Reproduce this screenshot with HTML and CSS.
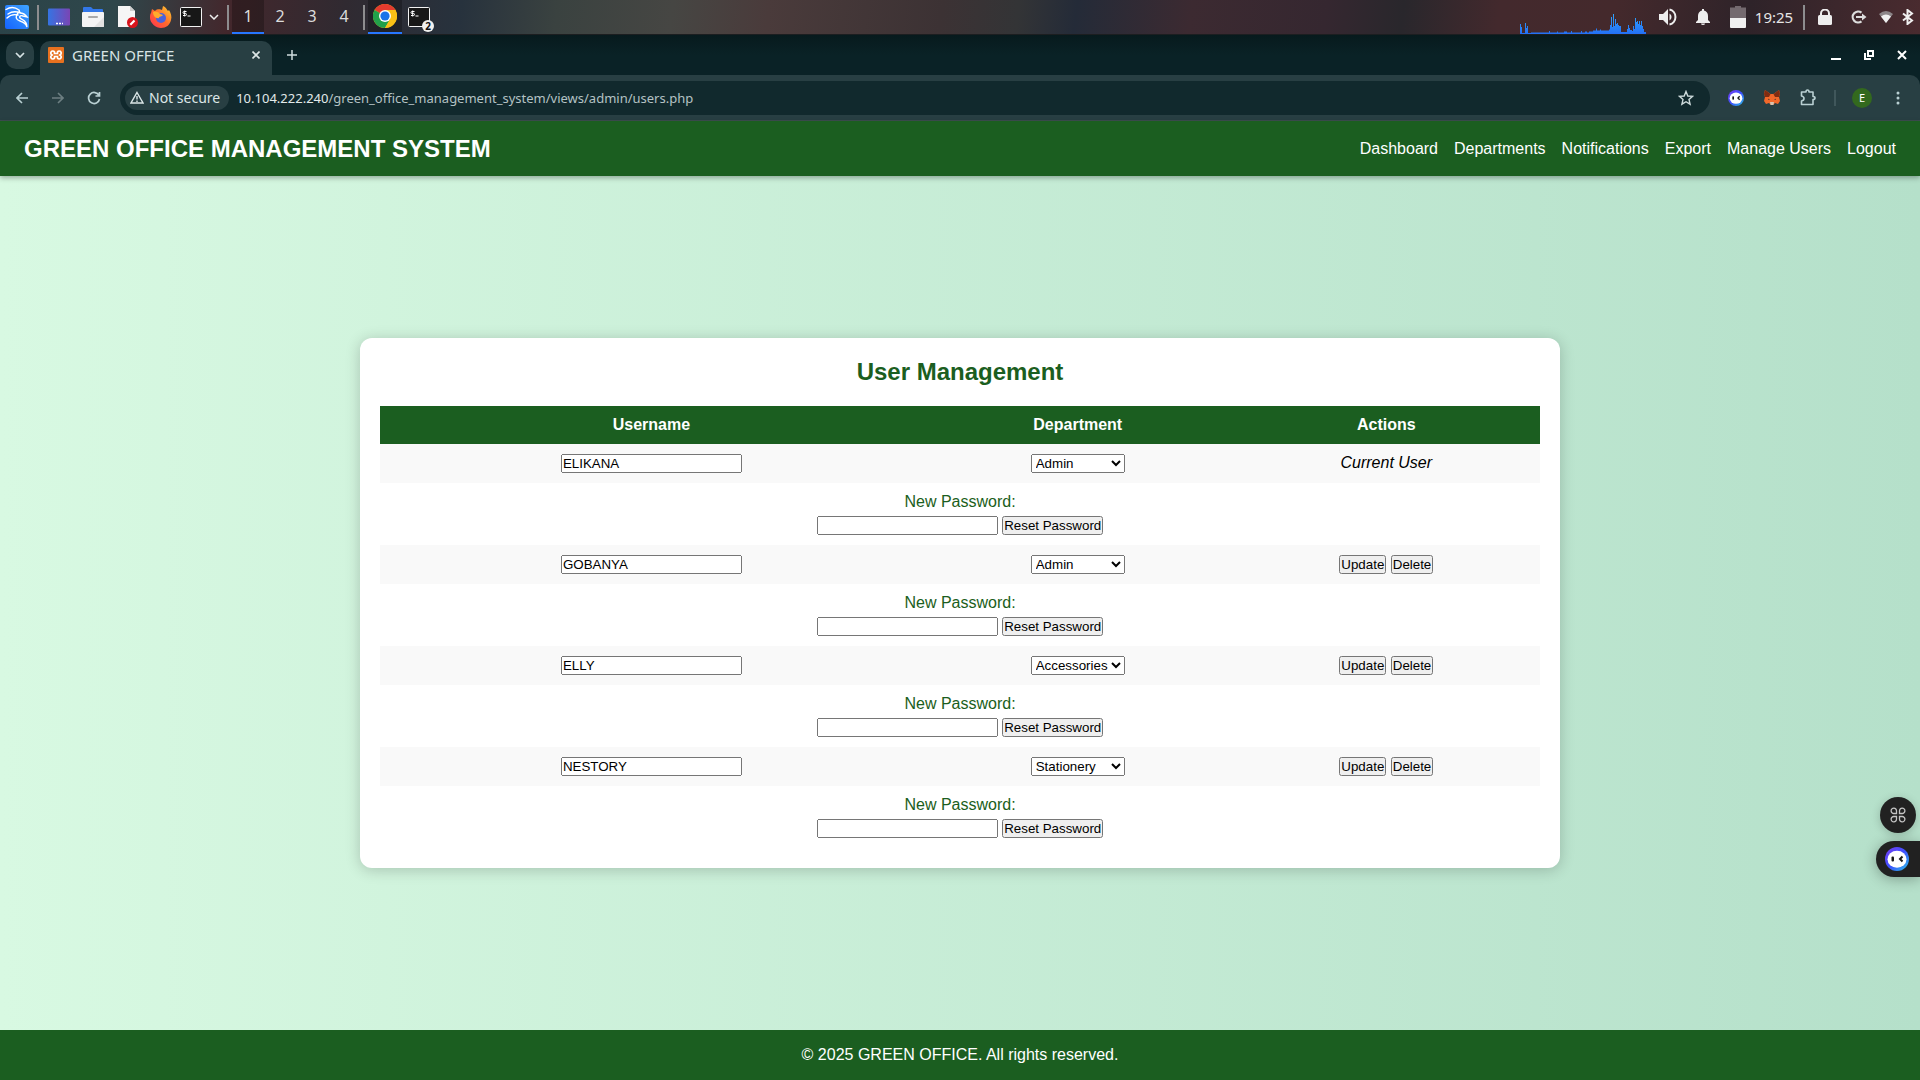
FILE: index.html
```html
<!DOCTYPE html>
<html lang="en">
<head>
<meta charset="utf-8">
<title>GREEN OFFICE</title>
<link rel="stylesheet" href="styles.css">
</head>
<body>
<svg class="defs" aria-hidden="true">
  <defs>
    <linearGradient id="kali" x1="0" y1="1" x2="1" y2="0"><stop offset="0" stop-color="#1463ff"/><stop offset="1" stop-color="#3fa4ff"/></linearGradient>
    <linearGradient id="desk" x1="0" y1="0" x2="1" y2="0"><stop offset="0" stop-color="#3574e3"/><stop offset="1" stop-color="#7a45b4"/></linearGradient>
    <linearGradient id="fox" x1="0" y1="1" x2="1" y2="0"><stop offset="0" stop-color="#ff2f55"/><stop offset=".5" stop-color="#ff6a2c"/><stop offset="1" stop-color="#ffd52e"/></linearGradient>
    <linearGradient id="load" x1="0" y1="0" x2="0" y2="1"><stop offset="0" stop-color="#2fa4ff"/><stop offset="1" stop-color="#2470f5"/></linearGradient>
    <linearGradient id="ring" x1="0" y1="0" x2="1" y2="1"><stop offset="0" stop-color="#7a3cf0"/><stop offset=".5" stop-color="#3c50ff"/><stop offset="1" stop-color="#2bc4e6"/></linearGradient>
    <symbol id="bot" viewBox="0 0 24 24">
      <circle cx="12" cy="12" r="12" fill="url(#ring)"/>
      <ellipse cx="12" cy="12.200" rx="9.500" ry="8.500" fill="#fff"/>
      <rect x="6.500" y="9.500" width="2.500" height="5" rx="1" fill="#161616"/>
      <path d="M17.500 9.500 15 12l2.500 2.500" fill="none" stroke="#161616" stroke-width="2"/>
    </symbol>
    <symbol id="term" viewBox="0 0 22 20">
      <rect x=".5" y=".5" width="21" height="19" rx="1" fill="#171717" stroke="#f2f2f2"/>
      <path d="M6.500 4.500H4Q3 4.500 3 5.500T4 6.500H5.500Q6.500 6.500 6.500 7.500T5.500 8.500H3M4.700 3.500v6M7.500 9h3" fill="none" stroke="#fff"/>
    </symbol>
  </defs>
</svg>

<div class="taskbar">
  <div class="slot"><svg width="26" height="24" viewBox="0 0 26 24"><rect x="1" width="24" height="24" rx="2" fill="url(#kali)"/><path d="M2 4.500C6 2 11 2 15 5M4 9c4-3 8-3 13-1M3 13c3-3 7-4 11-3M15 5l1 3c3 0 5 1 7 4l-4-1c-2-1-4 0-3 2 2 2 7 2 7 9-1-4-4-5-7-6-4-1-5-4-2-8" fill="none" stroke="#fff" stroke-width="1.400" stroke-linecap="round"/></svg></div>
  <span class="rule"></span>
  <div class="slot"><svg width="22" height="18" viewBox="0 0 22 18"><rect y=".5" width="22" height="17" rx="1" fill="url(#desk)"/><path d="M8 15.500h2m1 0h2m1 0h1" stroke="#fff" stroke-width="1.500"/></svg></div>
  <div class="slot"><svg width="22" height="20" viewBox="0 0 22 20"><path d="M1 1q0-1 1-1h7l2 2h9q1 0 1 1v4H1z" fill="#3277e8"/><path d="M0 6q0-1 1-1h20q1 0 1 1v13q0 1-1 1H1q-1 0-1-1z" fill="#f4f4f4"/><path d="M22 10v9q0 1-1 1h-9z" fill="#e2e2e2"/><rect x="6" y="9" width="10" height="2" rx="1" fill="#a9a9a9"/></svg></div>
  <div class="slot"><svg width="22" height="22" viewBox="0 0 22 22"><path d="M2 0h12l5 5v16H2z" fill="#f6f6f6"/><path d="M14 0l5 5h-5z" fill="#cfcfcf"/><circle cx="16.500" cy="16.500" r="5.500" fill="#d8141c"/><path d="M14.300 18.700 18.500 14.500" stroke="#fff" stroke-width="2.200"/></svg></div>
  <div class="slot"><svg width="22" height="22" viewBox="0 0 22 22"><path d="M1 7l1-4 3 2C8 2 11 4 12 4l1-4c3 1 4 4 5 5l1-1c2 3 3 7 2 10-1 5-5 8-10 8S0 17 0 12c0-2 0-4 1-5z" fill="url(#fox)"/><circle cx="11" cy="12" r="5" fill="#4a62dc"/><path d="M3 6c3-1 6 0 7 2l3 1c-1 2-4 1-4 3-3 1-6-2-6-6z" fill="#ffab2c"/></svg></div>
  <div class="slot slot-term"><svg width="22" height="20"><use href="#term"/></svg></div>
  <div class="slot slot-20"><svg width="10" height="6" viewBox="0 0 10 6"><path d="M1 1l4 4 4-4" fill="none" stroke="#eee" stroke-width="1.500"/></svg></div>
  <span class="rule"></span>
  <button class="workspace active">1</button>
  <button class="workspace">2</button>
  <button class="workspace">3</button>
  <button class="workspace">4</button>
  <span class="rule"></span>
  <div class="slot active"><svg width="24" height="24" viewBox="0 0 24 24"><circle cx="12" cy="12" r="12" fill="#fbc116"/><path d="M12 12 1.600 6A12 12 0 0 1 22.400 6z" fill="#e33b2e"/><path d="M12 12 1.600 6A12 12 0 0 0 12 24l5.200-9z" fill="#22a04a"/><path d="M12 6h10.400A12 12 0 0 1 12 24l5.200-9z" fill="#fbc116"/><circle cx="12" cy="12" r="6" fill="#fff"/><circle cx="12" cy="12" r="4.600" fill="#1a73e8"/></svg></div>
  <div class="slot stacked"><svg width="22" height="20"><use href="#term"/></svg><span class="count">2</span></div>

  <div class="tray">
    <svg class="load" width="126" height="20" viewBox="0 0 126 20"><path fill="url(#load)" d="M0 20V10h1v3h1v6h3V9h1v5h1v-2h1v7h3v-.500h18v-1.500h1v1.500h7v-1h1v1h6v-1h3v1h4v-1.500h1v1.500h9v-1.500h1v1.500h3v-1h2v1h2v-1h4v-1h3v-2h1v2h3v-1h1v1h8v-1h1V11h1V3h1v10h1V0h1v12h1V5h1v5h1v-1h1v2h1v1h2v6h6v-3h1v-4h1v3h1v2h2v1h1v-5h1v3h1v-11h1v4h1V7h1v3h1V7h1v4h1V7h1v5h1v3h1v3h2v2z"/></svg>
    <div class="slot slot-20"><svg width="18" height="18" viewBox="0 0 18 18"><path d="M0 6h4l5-5v16l-5-5H0z" fill="#eee"/><path d="M10.500 5.500a4 4 0 0 1 0 7z" fill="#eee"/><path d="M10.500 1.500a7.700 7.700 0 0 1 0 15" fill="none" stroke="#eee" stroke-width="2"/></svg></div>
    <div class="slot slot-50"><svg width="14" height="16" viewBox="0 0 14 16"><path d="M6 0h2v1.500q4 1 4 5.500v4l2 2v1H0v-1l2-2V7q0-4.500 4-5.500zM5 14.500h4q0 1.500-2 1.500t-2-1.500z" fill="#eee"/></svg></div>
    <div class="slot slot-20"><svg width="16" height="22" viewBox="0 0 16 22"><path d="M5 0h6v1.500h5V13H0V1.500h5z" fill="#746a6f"/><path d="M0 12h16v9q0 1-1 1H1q-1 0-1-1z" fill="#f0f0f0"/></svg></div>
    <time class="clock">19:25</time>
    <span class="rule"></span>
    <div class="slot"><svg width="14" height="16" viewBox="0 0 14 16"><path d="M3 7V4.500a4 4 0 0 1 8 0V7" fill="none" stroke="#eee" stroke-width="2"/><rect y="6" width="14" height="10" rx="1.500" fill="#eee"/></svg></div>
    <div class="slot"><svg width="16" height="14" viewBox="0 0 16 14"><path d="M10.500 2.600A5.500 5.500 0 1 0 10.500 11.400" fill="none" stroke="#ddd" stroke-width="2.200"/><path d="M5 6h6V3.500l4.500 3.500-4.500 3.500V8H5z" fill="#ddd"/></svg></div>
    <div class="slot slot-20"><svg width="14" height="12" viewBox="0 0 14 12"><path d="M0 3q7-6 14 0L7 12z" fill="#8c8588"/><path d="M2 5.500q5-4 10 0L7 12z" fill="#f0f0f0"/></svg></div>
    <div class="slot slot-24"><svg width="12" height="16" viewBox="0 0 12 16"><path d="M1 4.500 10 11.500 5.500 15V1L10 4.500 1 11.500" fill="none" stroke="#f0f0f0" stroke-width="2"/></svg></div>
  </div>
</div>

<div class="tabstrip">
  <button class="tab-search" aria-label="Search tabs"><svg width="10" height="6" viewBox="0 0 10 6"><path d="M1 1l4 4 4-4" fill="none" stroke="#d6e3e4" stroke-width="1.700"/></svg></button>
  <div class="tab">
    <svg width="16" height="16" viewBox="0 0 16 16"><rect width="16" height="16" rx="1" fill="#e8711f"/><path d="M6.500 6.500V5a2 2 0 1 0-2 3 2 2 0 1 0 2 3V9.500h3V11a2 2 0 1 0 2-3 2 2 0 1 0-2-3v1.500z" fill="none" stroke="#fff" stroke-width="1.700" stroke-linejoin="round"/></svg>
    <span class="tab-title">GREEN OFFICE</span>
    <button class="bare" aria-label="Close tab"><svg width="8" height="8" viewBox="0 0 8 8"><path d="M.5.500l7 7m0-7-7 7" stroke="#dde6e6" stroke-width="1.600"/></svg></button>
  </div>
  <button class="bare new-tab" aria-label="New tab"><svg width="10" height="10" viewBox="0 0 10 10"><path d="M5 0v10M0 5h10" stroke="#cfdcdd" stroke-width="1.500"/></svg></button>
  <div class="window-buttons">
    <button class="bare" aria-label="Minimize"><svg width="10" height="10" viewBox="0 0 10 10"><path d="M0 9h10" stroke="#fff" stroke-width="2"/></svg></button>
    <button class="bare" aria-label="Restore"><svg width="10" height="10" viewBox="0 0 10 10"><path d="M4 1h5v5H4zM1 3v6h6" fill="none" stroke="#fff" stroke-width="2"/></svg></button>
    <button class="bare" aria-label="Close"><svg width="10" height="10" viewBox="0 0 10 10"><path d="M1 1l8 8m0-8-8 8" stroke="#fff" stroke-width="2"/></svg></button>
  </div>
</div>

<div class="toolbar">
  <button class="bare tool" aria-label="Back"><svg width="12" height="12" viewBox="0 0 12 12"><path d="M12 6H1M6 1 1 6l5 5" fill="none" stroke="#b9d0d3" stroke-width="1.600"/></svg></button>
  <button class="bare tool" aria-label="Forward"><svg width="12" height="12" viewBox="0 0 12 12"><path d="M0 6h11M6 1l5 5-5 5" fill="none" stroke="#6d7f82" stroke-width="1.600"/></svg></button>
  <button class="bare tool" aria-label="Reload"><svg width="14" height="14" viewBox="0 0 14 14"><path d="M12 4.500A5.500 5.500 0 1 0 12.500 8M12.500 1v4H8.500" fill="none" stroke="#b9d0d3" stroke-width="1.700"/></svg></button>
  <div class="omnibox">
    <span class="chip"><svg width="14" height="13" viewBox="0 0 14 13"><path d="M7 1.500 13 12H1z" fill="none" stroke="#dce6e7" stroke-width="1.400"/><path d="M7 5v3.500m0 1V11" stroke="#dce6e7" stroke-width="1.400"/></svg>Not secure</span>
    <span class="url"><span class="host">10.104.222.240</span>/green_office_management_system/views/admin/users.php</span>
    <button class="bare" aria-label="Bookmark"><svg width="16" height="16" viewBox="0 0 16 16"><path d="M8 1.500 9.800 6l4.800.400L11 9.500l1.100 4.700L8 11.700l-4.100 2.500L5 9.500 1.400 6.400 6.200 6z" fill="none" stroke="#cddadb" stroke-width="1.400"/></svg></button>
  </div>
  <button class="bare tool" aria-label="Assistant"><svg width="16" height="16"><use href="#bot"/></svg></button>
  <button class="bare tool" aria-label="Wallet"><svg width="16" height="15" viewBox="0 0 16 15"><path d="M1 0l5.500 4h3L15 0l1 4-1 3 1 4-2 3-3-1-1.500 1.500h-3L5 13l-3 1-2-3 1-4-1-3z" fill="#f2682a"/><path d="M1 0l5.500 4L5 7 1 7 0 4zM15 0 9.500 4 11 7l4 0 1-3z" fill="#802c12"/><path d="M6 12h4l-.5 3h-3z" fill="#d9c2ae"/><path d="M4 8.500l2 1.500H4.500zM12 8.500 10 10h1.500z" fill="#333"/></svg></button>
  <button class="bare tool" aria-label="Extensions"><svg width="16" height="17" viewBox="0 0 16 17"><path d="M1.500 3H6Q6 1 7.500 1T9 3h4v4.500q2 0 2 1.500T13 10.500v5H1.500V12Q4 11.500 4 9.500T1.500 7z" fill="none" stroke="#b9d0d3" stroke-width="1.600" stroke-linejoin="round"/></svg></button>
  <span class="tool-rule"></span>
  <button class="bare tool" aria-label="Profile"><span class="avatar">E</span></button>
  <button class="bare tool" aria-label="Menu"><svg width="4" height="14" viewBox="0 0 4 14"><g fill="#b9d0d3"><circle cx="2" cy="2" r="1.500"/><circle cx="2" cy="7" r="1.500"/><circle cx="2" cy="12" r="1.500"/></g></svg></button>
</div>

<div class="page">
  <header class="site-header">
    <h1>GREEN OFFICE MANAGEMENT SYSTEM</h1>
    <nav>
      <a href="#">Dashboard</a>
      <a href="#">Departments</a>
      <a href="#">Notifications</a>
      <a href="#">Export</a>
      <a href="#">Manage Users</a>
      <a href="#">Logout</a>
    </nav>
  </header>

  <main>
    <section class="card">
      <h2>User Management</h2>
      <table>
        <colgroup><col class="col-user"><col class="col-dept"><col class="col-act"></colgroup>
        <thead>
          <tr><th>Username</th><th>Department</th><th>Actions</th></tr>
        </thead>
        <tbody>
          <tr>
            <td><input type="text" value="ELIKANA" aria-label="Username"></td>
            <td><select aria-label="Department"><option>Admin</option><option>Accessories</option><option>Stationery</option></select></td>
            <td><em>Current User</em></td>
          </tr>
          <tr><td colspan="3"><label for="pw1">New Password:</label><input type="password" id="pw1"> <button>Reset Password</button></td></tr>
          <tr>
            <td><input type="text" value="GOBANYA" aria-label="Username"></td>
            <td><select aria-label="Department"><option>Admin</option><option>Accessories</option><option>Stationery</option></select></td>
            <td><button>Update</button> <button>Delete</button></td>
          </tr>
          <tr><td colspan="3"><label for="pw2">New Password:</label><input type="password" id="pw2"> <button>Reset Password</button></td></tr>
          <tr>
            <td><input type="text" value="ELLY" aria-label="Username"></td>
            <td><select aria-label="Department"><option>Admin</option><option selected>Accessories</option><option>Stationery</option></select></td>
            <td><button>Update</button> <button>Delete</button></td>
          </tr>
          <tr><td colspan="3"><label for="pw3">New Password:</label><input type="password" id="pw3"> <button>Reset Password</button></td></tr>
          <tr>
            <td><input type="text" value="NESTORY" aria-label="Username"></td>
            <td><select aria-label="Department"><option>Admin</option><option>Accessories</option><option selected>Stationery</option></select></td>
            <td><button>Update</button> <button>Delete</button></td>
          </tr>
          <tr><td colspan="3"><label for="pw4">New Password:</label><input type="password" id="pw4"> <button>Reset Password</button></td></tr>
        </tbody>
      </table>
    </section>
  </main>

  <footer>© 2025 GREEN OFFICE. All rights reserved.</footer>
</div>

<div class="floaters">
  <button class="bare float-round" aria-label="Shortcuts"><svg width="16" height="16" viewBox="0 0 16 16"><path d="M6.500 6.500H4A2.700 2.700 0 1 1 6.500 4zM9.500 6.500H12A2.700 2.700 0 1 0 9.500 4zM6.500 9.500H4A2.700 2.700 0 1 0 6.500 12zM9.500 9.500H12A2.700 2.700 0 1 1 9.500 12z" fill="none" stroke="#c4c4c4" stroke-width="1.300"/></svg></button>
  <button class="bare float-pill" aria-label="Open assistant"><svg width="24" height="24"><use href="#bot"/></svg></button>
</div>
</body>
</html>
```
FILE: styles.css
```css
* {
  margin: 0;
  padding: 0;
  box-sizing: border-box;
}

body {
  display: flex;
  flex-direction: column;
  min-height: 100vh;
  font-family: "Liberation Sans", Arial, sans-serif;
  font-size: 16px;
  background: #0a2226;
}

svg {
  display: block;
  flex: none;
}

.defs {
  position: absolute;
  width: 0;
  height: 0;
}

.bare {
  display: flex;
  align-items: center;
  justify-content: center;
  border: 0;
  background: none;
}

/* Desktop panel */
.taskbar {
  display: flex;
  height: 35px;
  border-bottom: 1px solid #1c1e20;
  font-family: "Noto Sans", sans-serif;
  color: #e6e6e6;
  background: linear-gradient(97deg, #2b4348 0%, #2f474b 6%, #43272c 12%, #302a31 18%, #27323d 24%, #3a4240 29%, #464643 35%, #4a3b3b 40%, #3c3234 49%, #333436 53%, #242b38 56%, #3c2a31 62%, #352730 69%, #29272c 73%, #43292d 78%, #44292c 84%, #2e2329 91%, #4a2b2f 100%);
}

.slot {
  display: flex;
  align-items: center;
  justify-content: center;
  width: 34px;
}

.slot-20 { width: 20px; }
.slot-24 { width: 24px; }
.slot-term { width: 26px; }
.slot-50 { width: 50px; }

.rule {
  width: 2px;
  height: 25px;
  margin: 5px 3px;
  background: #8d8d8f;
}

.workspace {
  width: 32px;
  border: 0;
  border-bottom: 2px solid transparent;
  font: 16px "Noto Sans", sans-serif;
  color: #dcdcdc;
  background: none;
}

.active {
  border-bottom: 2px solid #2777ff;
  background: rgb(0 0 0 / 25%);
}

.stacked { position: relative; }

.count {
  position: absolute;
  right: 2px;
  bottom: 2px;
  width: 12px;
  height: 12px;
  border-radius: 6px;
  font: bold 10px/12px "Noto Sans", sans-serif;
  text-align: center;
  color: #111;
  background: #f0f0ee;
}

.tray {
  display: flex;
  margin-left: auto;
}

.load {
  align-self: flex-end;
  margin-right: 12px;
}

.clock {
  width: 52px;
  font-size: 15px;
  line-height: 34px;
  text-align: center;
}

/* Browser window frame */
.tabstrip {
  display: flex;
  align-items: center;
  height: 40px;
  padding-left: 6px;
  font: 15px "Noto Sans", sans-serif;
  color: #d8e4e5;
  background: linear-gradient(#071a1d, #0a2226 50%);
}

.tab-search {
  display: flex;
  align-items: center;
  justify-content: center;
  width: 28px;
  height: 28px;
  border: 0;
  border-radius: 10px;
  background: #283f43;
}

.tab {
  display: flex;
  align-items: center;
  align-self: flex-end;
  gap: 8px;
  width: 232px;
  height: 34px;
  margin-left: 6px;
  padding: 0 12px 7px 8px;
  border-radius: 10px 10px 0 0;
  background: #283f43;
}

.tab-title { flex: 1; }

.new-tab {
  width: 40px;
  height: 28px;
}

.window-buttons {
  display: flex;
  gap: 23px;
  margin-left: auto;
  padding-right: 13px;
}

.toolbar {
  display: flex;
  align-items: center;
  height: 46px;
  padding: 0 4px;
  border-bottom: 1px solid #3d4d50;
  border-radius: 10px 10px 0 0;
  background: #283f43;
}

.tool {
  width: 36px;
  height: 34px;
}

.omnibox {
  display: flex;
  flex: 1;
  align-items: center;
  height: 34px;
  margin: 0 8px;
  padding: 0 16px 0 5px;
  border-radius: 17px;
  font: 13px "Noto Sans", sans-serif;
  color: #b4c2c4;
  background: #11292d;
}

.chip {
  display: flex;
  align-items: center;
  gap: 5px;
  height: 24px;
  padding: 0 9px 0 5px;
  border-radius: 12px;
  font-size: 14px;
  color: #dce6e7;
  background: #283f43;
}

.url {
  flex: 1;
  margin-left: 7px;
}

.host { color: #e2eaea; }

.tool-rule {
  width: 2px;
  height: 16px;
  margin: 0 8px;
  background: #40575b;
}

.avatar {
  width: 20px;
  height: 20px;
  border-radius: 10px;
  font: 11px/20px "Noto Sans", sans-serif;
  text-align: center;
  color: #fff;
  background: #33691e;
}

/* Web page */
.page {
  display: flex;
  flex: 1;
  flex-direction: column;
  background: linear-gradient(to right, #d8f9e2, #b5e0ca);
}

.site-header {
  display: flex;
  align-items: center;
  justify-content: space-between;
  padding: 14px 24px;
  color: #fff;
  background: #1b5e20;
  box-shadow: 0 2px 5px rgb(0 0 0 / 30%);
}

h1 {
  font-size: 24px;
  line-height: 27px;
}

nav {
  display: flex;
  gap: 16px;
}

nav a {
  color: #fff;
  text-decoration: none;
}

main {
  display: flex;
  flex: 1;
  align-items: center;
  justify-content: center;
}

.card {
  width: 100%;
  max-width: 1200px;
  padding: 20px;
  border-radius: 12px;
  background: #fff;
  box-shadow: 0 2px 15px rgb(0 0 0 / 20%);
}

h2 {
  margin-bottom: 20px;
  font-size: 24px;
  line-height: 28px;
  text-align: center;
  color: #1b5e20;
}

table {
  width: 100%;
  border-collapse: collapse;
  table-layout: fixed;
}

.col-user { width: 46.8%; }
.col-dept { width: 26.7%; }
.col-act { width: 26.5%; }

th,
td {
  padding: 10px;
  line-height: 18px;
  text-align: center;
  vertical-align: top;
}

th {
  color: #fff;
  background: #1b5e20;
}

tbody tr:nth-child(odd) { background: #f9f9f9; }

td input { width: 181px; }
td select { width: 94px; }

label {
  display: block;
  margin-bottom: 5px;
  color: #1b5e20;
}

footer {
  padding: 16px;
  line-height: 18px;
  text-align: center;
  color: #fff;
  background: #1b5e20;
}

/* Extension buttons that float over the page */
.floaters {
  position: fixed;
  right: 0;
  bottom: 203px;
  display: flex;
  flex-direction: column;
  align-items: flex-end;
  gap: 8px;
}

.float-round {
  width: 36px;
  height: 36px;
  margin-right: 4px;
  border-radius: 18px;
  background: #212121;
  box-shadow: 0 2px 10px rgb(0 0 0 / 20%);
}

.float-pill {
  width: 44px;
  height: 36px;
  padding-right: 2px;
  border-radius: 18px 0 0 18px;
  background: #212121;
  box-shadow: 0 2px 14px rgb(0 0 0 / 30%);
}
```
